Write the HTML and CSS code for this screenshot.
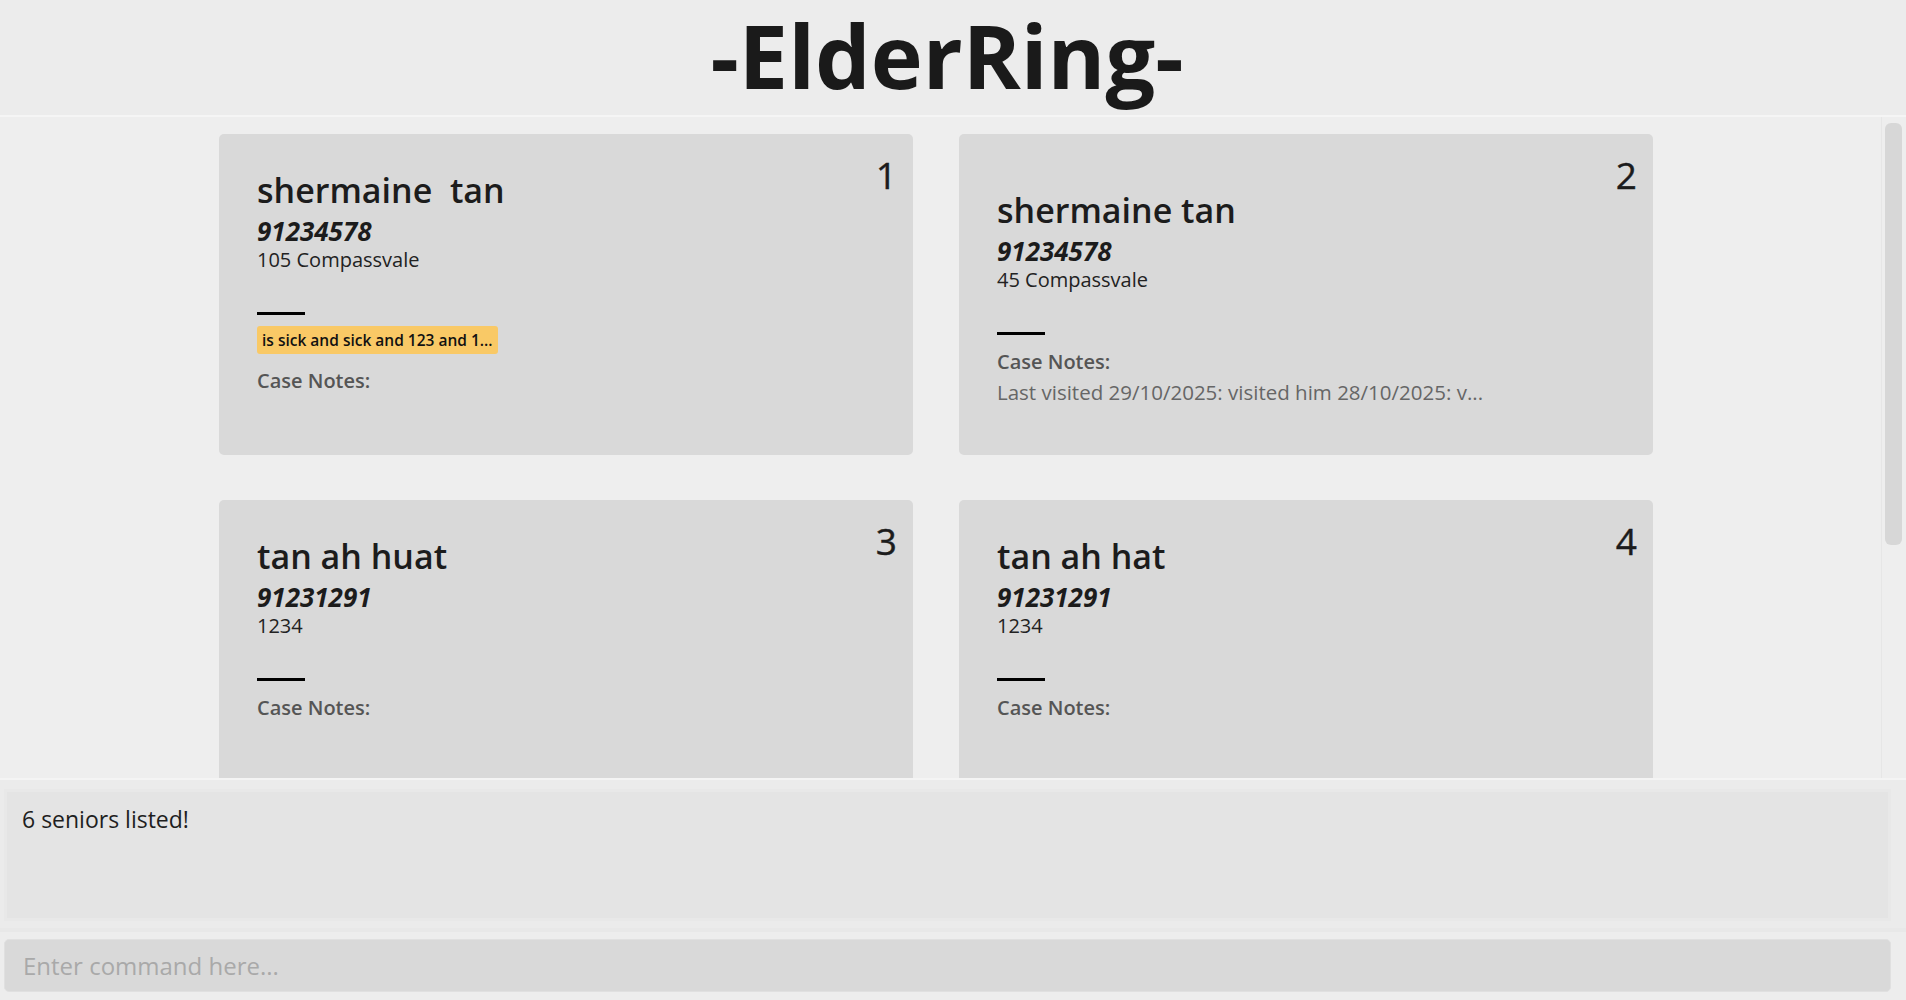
FILE: index.html
```html
<!DOCTYPE html>
<html lang="en">
<head>
    <meta charset="UTF-8">
    <meta name="viewport" content="width=device-width, initial-scale=1.0">
    <title>ElderRing</title>
    <link rel="stylesheet" href="styles.css">
</head>
<body>

    <header class="app-header">
        <h1 class="app-title">-ElderRing-</h1>
    </header>

    <div class="main-panel">
        <div class="senior-list">

            <div class="card">
                <span class="card-index">1</span>
                <div class="senior-name">shermaine  tan</div>
                <div class="senior-phone">91234578</div>
                <div class="senior-address">105 Compassvale</div>
                <div class="divider"></div>
                <div class="tags">
                    <span class="tag">is sick and sick and 123 and 1...</span>
                </div>
                <div class="notes-label">Case Notes:</div>
                <div class="notes-text"></div>
            </div>

            <div class="card">
                <span class="card-index">2</span>
                <div class="senior-name">shermaine tan</div>
                <div class="senior-phone">91234578</div>
                <div class="senior-address">45 Compassvale</div>
                <div class="divider"></div>
                <div class="notes-label">Case Notes:</div>
                <div class="notes-text">Last visited 29/10/2025: visited him 28/10/2025: v...</div>
            </div>

            <div class="card">
                <span class="card-index">3</span>
                <div class="senior-name">tan ah huat</div>
                <div class="senior-phone">91231291</div>
                <div class="senior-address">1234</div>
                <div class="divider"></div>
                <div class="notes-label">Case Notes:</div>
                <div class="notes-text"></div>
            </div>

            <div class="card">
                <span class="card-index">4</span>
                <div class="senior-name">tan ah hat</div>
                <div class="senior-phone">91231291</div>
                <div class="senior-address">1234</div>
                <div class="divider"></div>
                <div class="notes-label">Case Notes:</div>
                <div class="notes-text"></div>
            </div>

        </div>
        <div class="scrollbar">
            <div class="scrollbar-thumb"></div>
        </div>
    </div>

    <div class="result-section">
        <div class="result-box">6 seniors listed!</div>
    </div>

    <div class="command-section">
        <input type="text" class="command-input" placeholder="Enter command here...">
    </div>

</body>
</html>
```

FILE: styles.css
```css
body {
    font-family: 'Open Sans', 'Noto Sans', sans-serif;
    background-color: #ededed;
    color: #1c1c1c;
    margin: 0;
    padding: 0;
    height: 100vh;
    display: flex;
    flex-direction: column;
    overflow: hidden;
}

.app-header {
    height: 117px;
    padding-right: 12px;
    border-bottom: 2px solid #f5f5f5;
    background-color: #ececec;
    display: flex;
    justify-content: center;
    align-items: flex-start;
    box-sizing: border-box;
    flex-shrink: 0;
}

.app-title {
    margin: 0;
    font-size: 88px;
    line-height: 110px;
    font-weight: 700;
    color: #1a1a1a;
}

.main-panel {
    height: 661px;
    display: flex;
    background-color: #eeeeee;
    border-bottom: 2px solid #f4f4f4;
    flex-shrink: 0;
}

.senior-list {
    flex: 1;
    overflow: hidden;
    display: grid;
    grid-template-columns: repeat(2, 694px);
    column-gap: 46px;
    row-gap: 45px;
    align-content: start;
    padding: 17px 0 0 219px;
}

.card {
    position: relative;
    background-color: #d9d9d9;
    border-radius: 5px;
    padding: 33px 16px 33px 38px;
    display: flex;
    flex-direction: column;
    justify-content: center;
}

.card-index {
    position: absolute;
    top: 22px;
    right: 16px;
    font-size: 37px;
    line-height: 1;
    color: #1c1c1c;
    -webkit-text-stroke: 0.4px #1c1c1c;
}

.senior-name {
    font-size: 34px;
    line-height: 46px;
    font-weight: 600;
    white-space: pre;
}

.senior-phone {
    font-size: 26px;
    line-height: 36px;
    font-weight: 700;
    font-style: italic;
}

.senior-address {
    font-size: 20px;
    line-height: 22px;
    color: #222;
}

.divider {
    width: 48px;
    height: 3px;
    background-color: #000;
    margin-top: 41px;
}

.tags {
    display: flex;
    margin-top: 11px;
}

.tag {
    background-color: #f9c966;
    border-radius: 3px;
    height: 28px;
    line-height: 28px;
    padding: 0 5px;
    font-size: 15.5px;
    font-weight: 600;
    color: #111;
}

.notes-label {
    margin-top: 13px;
    font-size: 20px;
    line-height: 27px;
    font-weight: 600;
    color: #555;
}

.notes-text {
    margin-top: 6px;
    height: 22px;
    font-size: 20.5px;
    line-height: 22px;
    color: #666;
}

.scrollbar {
    width: 25px;
    border-left: 1px solid #e6e6e6;
    box-sizing: border-box;
    padding: 6px 4px 0 3px;
}

.scrollbar-thumb {
    height: 422px;
    background-color: #d7d7d7;
    border-radius: 6px;
}

.result-section {
    height: 152px;
    box-sizing: border-box;
    padding: 9px 15px 7px 4px;
    border-bottom: 4px solid #e8e8e8;
    background-color: #ebebeb;
    flex-shrink: 0;
}

.result-box {
    height: 100%;
    box-sizing: border-box;
    border: 3px solid #e8e8e8;
    background-color: #e4e4e4;
    padding: 11px 15px;
    font-size: 23px;
    color: #1e1e1e;
}

.command-section {
    flex: 1;
    padding: 7px 15px 8px 4px;
}

.command-input {
    width: 100%;
    height: 53px;
    box-sizing: border-box;
    border: 1px solid #e0e0e0;
    border-radius: 5px;
    background-color: #d9d9d9;
    padding: 0 18px;
    font-family: 'Open Sans', 'Noto Sans', sans-serif;
    font-size: 24px;
    color: #1c1c1c;
    outline: none;
}

.command-input::placeholder {
    color: #a9a9a9;
}
```
